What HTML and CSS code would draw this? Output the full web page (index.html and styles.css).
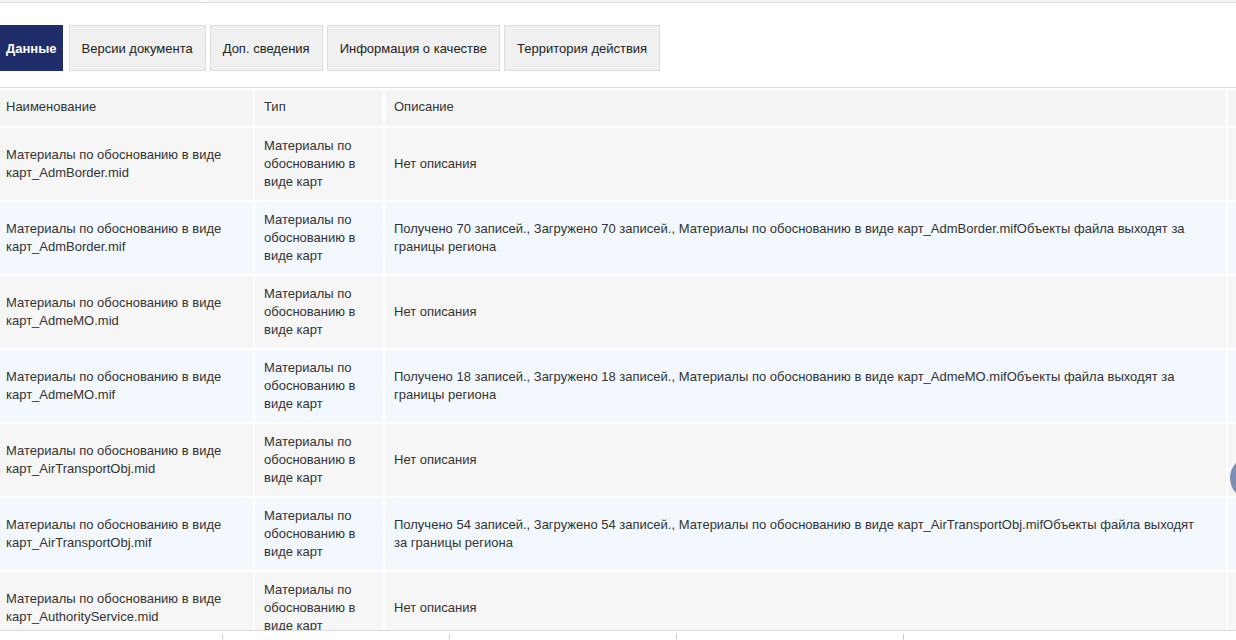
FILE: index.html
```html
<!DOCTYPE html>
<html lang="ru">
<head>
<meta charset="utf-8">
<title>Данные</title>
<link rel="stylesheet" href="styles.css">
</head>
<body>
<div class="topbar">
  <div class="topbar-seg topbar-seg--left"></div>
  <div class="topbar-seg topbar-seg--right"></div>
</div>
<nav class="tabs">
  <div class="tab tab--active">Данные</div>
  <div class="tab">Версии документа</div>
  <div class="tab">Доп. сведения</div>
  <div class="tab">Информация о качестве</div>
  <div class="tab">Территория действия</div>
</nav>
<div class="rule"></div>
<main class="table-wrap">
  <div class="grid">
    <div class="cell head">Наименование</div>
    <div class="cell head">Тип</div>
    <div class="cell head desc">Описание</div>
    <div class="cell head"></div>

    <div class="cell">Материалы по обоснованию в виде карт_AdmBorder.mid</div>
    <div class="cell">Материалы по обоснованию в виде карт</div>
    <div class="cell desc">Нет описания</div>
    <div class="cell"></div>

    <div class="cell alt">Материалы по обоснованию в виде карт_AdmBorder.mif</div>
    <div class="cell alt">Материалы по обоснованию в виде карт</div>
    <div class="cell alt desc">Получено 70 записей., Загружено 70 записей., Материалы по обоснованию в виде карт_AdmBorder.mifОбъекты файла выходят за границы региона</div>
    <div class="cell alt"></div>

    <div class="cell">Материалы по обоснованию в виде карт_AdmeMO.mid</div>
    <div class="cell">Материалы по обоснованию в виде карт</div>
    <div class="cell desc">Нет описания</div>
    <div class="cell"></div>

    <div class="cell alt">Материалы по обоснованию в виде карт_AdmeMO.mif</div>
    <div class="cell alt">Материалы по обоснованию в виде карт</div>
    <div class="cell alt desc">Получено 18 записей., Загружено 18 записей., Материалы по обоснованию в виде карт_AdmeMO.mifОбъекты файла выходят за границы региона</div>
    <div class="cell alt"></div>

    <div class="cell">Материалы по обоснованию в виде карт_AirTransportObj.mid</div>
    <div class="cell">Материалы по обоснованию в виде карт</div>
    <div class="cell desc">Нет описания</div>
    <div class="cell"></div>

    <div class="cell alt">Материалы по обоснованию в виде карт_AirTransportObj.mif</div>
    <div class="cell alt">Материалы по обоснованию в виде карт</div>
    <div class="cell alt desc">Получено 54 записей., Загружено 54 записей., Материалы по обоснованию в виде карт_AirTransportObj.mifОбъекты файла выходят за границы региона</div>
    <div class="cell alt"></div>

    <div class="cell">Материалы по обоснованию в виде карт_AuthorityService.mid</div>
    <div class="cell">Материалы по обоснованию в виде карт</div>
    <div class="cell desc">Нет описания</div>
    <div class="cell"></div>
  </div>
</main>
<footer class="footer">
  <span class="tick"></span>
  <span class="tick"></span>
  <span class="tick"></span>
  <span class="tick"></span>
</footer>
<div class="scroll-btn"></div>
</body>
</html>
```

FILE: styles.css
```css
html, body {
  margin: 0;
  padding: 0;
}

body {
  width: 1236px;
  height: 640px;
  overflow: hidden;
  display: flex;
  flex-direction: column;
  background: #ffffff;
  color: #333333;
  font-family: "Liberation Sans", Arial, sans-serif;
  font-size: 13px;
}

.topbar {
  display: flex;
  gap: 3px;
  height: 2px;
  margin-bottom: 2px;
  border-bottom: 1px solid #dddddd;
}

.topbar-seg {
  background: #f4f4f4;
  height: 2px;
}

.topbar-seg--left {
  width: 201px;
}

.topbar-seg--right {
  flex: 1;
}

.tabs {
  display: flex;
  gap: 4px;
  margin-top: 20px;
  height: 46px;
}

.tab {
  box-sizing: border-box;
  height: 46px;
  line-height: 45px;
  padding: 0 12px;
  background: #f0f0f0;
  border: 1px solid #dcdcdc;
  color: #222222;
  white-space: nowrap;
}

.tab--active {
  background: #1f2d6b;
  border-color: #1f2d6b;
  color: #ffffff;
  font-weight: bold;
  padding: 0 5px 0 5px;
  margin-right: 2px;
}

.rule {
  margin-top: 16px;
  height: 1px;
  background: #dddddd;
}

.table-wrap {
  flex: 1;
  overflow: hidden;
  padding-top: 2px;
}

.grid {
  display: grid;
  grid-template-columns: 253px 128px 841px 20px;
  grid-template-rows: 36px;
  grid-auto-rows: 72px;
  gap: 2px;
}

.cell {
  box-sizing: border-box;
  display: flex;
  align-items: center;
  padding: 0 14px 0 6px;
  background: #f6f6f6;
  line-height: 18px;
  color: #333333;
}

.cell:nth-child(4n+2) {
  padding: 0 9px 0 9px;
}

.cell.desc {
  padding: 0 22px 0 9px;
}

.cell.head {
  background: #f5f5f5;
  padding-bottom: 3px;
}

.cell.alt {
  background: #f2f8fd;
}

.footer {
  height: 10px;
  flex: none;
  box-sizing: border-box;
  border-top: 1px solid #dddddd;
  background: #ffffff;
  display: flex;
  padding-left: 222px;
}

.tick {
  width: 227px;
  height: 6px;
  margin-top: 3px;
  border-left: 1px solid #cccccc;
  box-sizing: border-box;
}

.scroll-btn {
  position: fixed;
  left: 1230px;
  top: 456px;
  width: 44px;
  height: 44px;
  border-radius: 50%;
  background: #7d8db3;
}
```
